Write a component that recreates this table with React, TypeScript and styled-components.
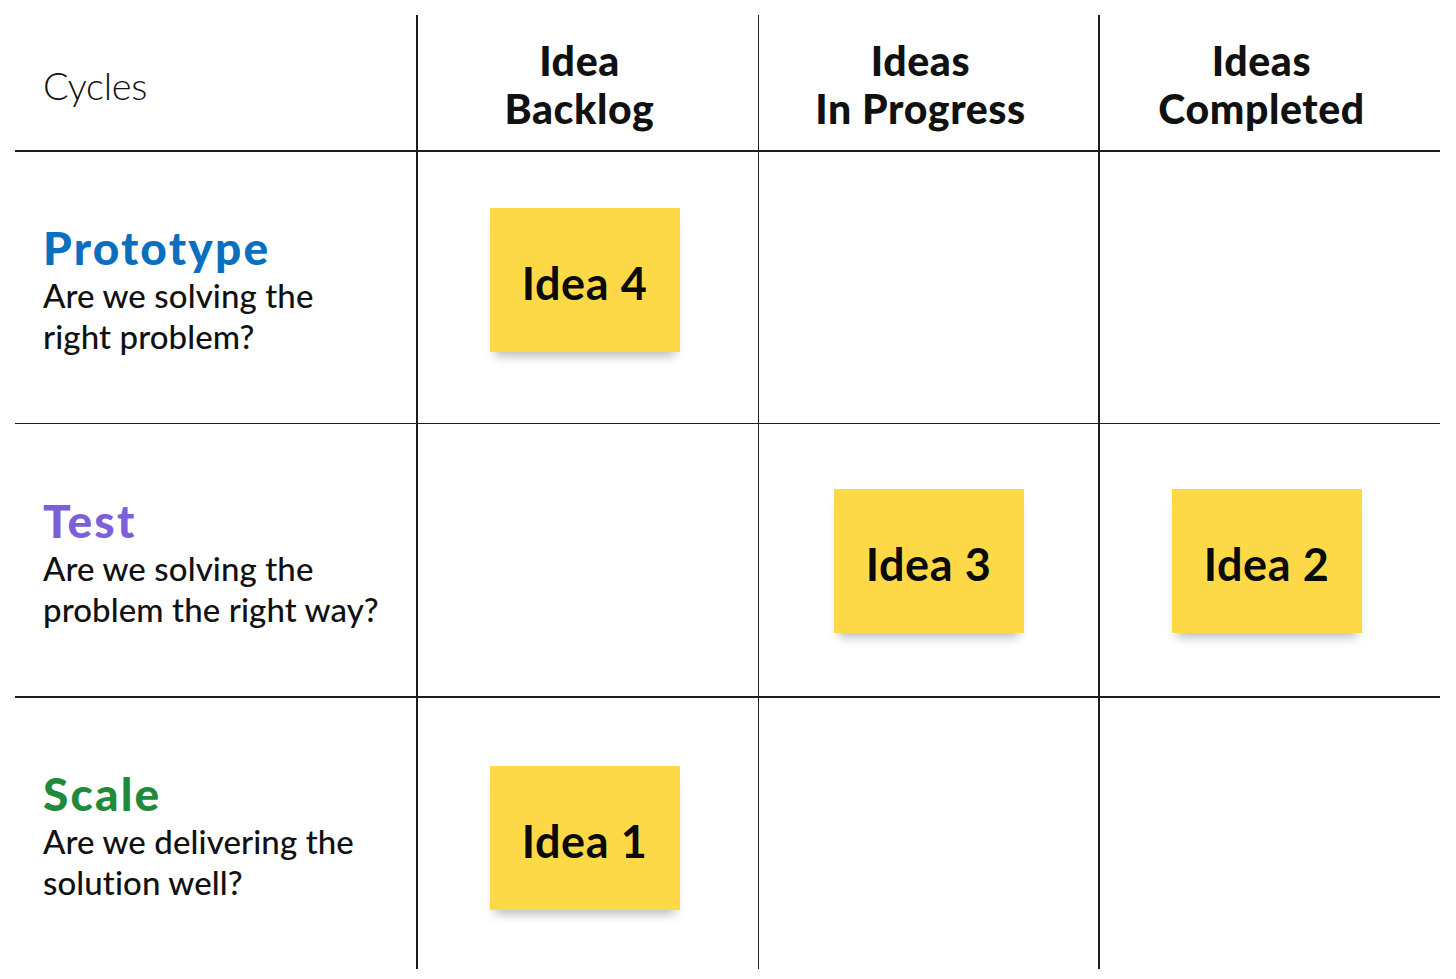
import React from "react";
import styled, { createGlobalStyle } from "styled-components";

const Global = createGlobalStyle`
  html, body { margin: 0; padding: 0; background: #ffffff; }
  body { font-family: Lato, "Noto Sans", sans-serif; color: #111; }
`;

const Board = styled.div`
  padding: 15px;
  width: 1456px;
  height: 979px;
  box-sizing: border-box;
`;

const Grid = styled.div`
  display: grid;
  grid-template-columns: 401px 340px 339px 340px;
  grid-template-rows: 135px 271px 272px 271px;
  gap: 1.5px;
  background: #1e1e1e;
  width: fit-content;
`;

const Cell = styled.div`
  background: #ffffff;
  display: flex;
  align-items: center;
  justify-content: center;
  position: relative;
`;

const CornerCell = styled(Cell)`
  justify-content: flex-start;
  padding-left: 28px;
`;

const CornerTitle = styled.div`
  font-family: Lato, sans-serif;
  font-weight: 300;
  font-size: 38px;
  letter-spacing: -0.3px;
  margin-top: 4px;
`;

const ColHead = styled.div`
  font-family: Lato, sans-serif;
  font-weight: 900;
  font-size: 41px;
  line-height: 48px;
  letter-spacing: 0.6px;
  text-align: center;
  margin: 4px 16px 0 0;
`;

const LabelCell = styled(Cell)`
  justify-content: flex-start;
  padding-left: 28px;
`;

const LabelBlock = styled.div<{ $shift: number }>`
  display: flex;
  flex-direction: column;
  margin-top: ${(p) => p.$shift}px;
`;

const Stage = styled.div<{ $color: string }>`
  font-family: Lato, sans-serif;
  font-weight: 900;
  font-size: 46px;
  line-height: 54px;
  color: ${(p) => p.$color};
  letter-spacing: 2.2px;
`;

const Question = styled.div`
  font-family: Lato, sans-serif;
  font-weight: 500;
  font-size: 33px;
  line-height: 41px;
  letter-spacing: 0.1px;
  color: #111;
`;

const Sticky = styled.div<{ $dx: number; $dy: number }>`
  width: 190px;
  height: 144px;
  box-sizing: border-box;
  padding-top: 5px;
  background: #fdd948;
  display: flex;
  align-items: center;
  justify-content: center;
  font-family: Lato, sans-serif;
  font-weight: 700;
  font-size: 45px;
  letter-spacing: 0.6px;
  color: #0a0a0a;
  transform: translate(${(p) => p.$dx}px, ${(p) => p.$dy}px);
  box-shadow: 0 9px 10px -5px rgba(0, 0, 0, 0.28);
`;

type Row = {
  stage: string;
  color: string;
  shift: number;
  q: React.ReactNode;
  notes: (null | { text: string; dx: number; dy: number })[];
};

const rows: Row[] = [
  {
    stage: "Prototype",
    color: "#0b6fbf",
    shift: 4,
    q: (
      <>
        Are we solving the
        <br />
        right problem?
      </>
    ),
    notes: [{ text: "Idea 4", dx: -3, dy: -7 }, null, null],
  },
  {
    stage: "Test",
    color: "#7d5fda",
    shift: 4,
    q: (
      <>
        Are we solving the
        <br />
        problem the right way?
      </>
    ),
    notes: [null, { text: "Idea 3", dx: 0, dy: 1 }, { text: "Idea 2", dx: -3, dy: 1 }],
  },
  {
    stage: "Scale",
    color: "#1f8a3b",
    shift: 4,
    q: (
      <>
        Are we delivering the
        <br />
        solution well?
      </>
    ),
    notes: [{ text: "Idea 1", dx: -3, dy: 5 }, null, null],
  },
];

const headers = [
  ["Idea", "Backlog"],
  ["Ideas", "In Progress"],
  ["Ideas", "Completed"],
];

export default function App() {
  return (
    <Board>
      <Global />
      <Grid>
        <CornerCell>
          <CornerTitle>Cycles</CornerTitle>
        </CornerCell>
        {headers.map((h) => (
          <Cell key={h.join(" ")}>
            <ColHead>
              {h[0]}
              <br />
              {h[1]}
            </ColHead>
          </Cell>
        ))}
        {rows.map((r) => (
          <React.Fragment key={r.stage}>
            <LabelCell>
              <LabelBlock $shift={r.shift}>
                <Stage $color={r.color}>{r.stage}</Stage>
                <Question>{r.q}</Question>
              </LabelBlock>
            </LabelCell>
            {r.notes.map((n, i) => (
              <Cell key={i}>
                {n && (
                  <Sticky $dx={n.dx} $dy={n.dy}>
                    {n.text}
                  </Sticky>
                )}
              </Cell>
            ))}
          </React.Fragment>
        ))}
      </Grid>
    </Board>
  );
}
